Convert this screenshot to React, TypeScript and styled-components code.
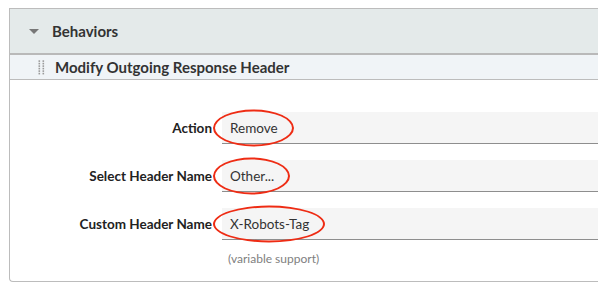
import React from "react";
import styled, { createGlobalStyle } from "styled-components";

const GlobalStyle = createGlobalStyle`
    html, body {
        margin: 0;
        padding: 0;
        background: #fff;
        font-family: Lato, "Liberation Sans", sans-serif;
        color: #333;
    }
`;

const Page = styled.div`
    padding: 8px 0 0 9px;
    width: 598px;
    height: 299px;
    box-sizing: border-box;
    overflow: hidden;
`;

const Panel = styled.section`
    height: 274px;
    box-sizing: border-box;
    border: 1px solid #bcbcbc;
    border-right: none;
    border-radius: 0 0 0 4px;
    display: flex;
    flex-direction: column;
`;

const Header = styled.div`
    display: flex;
    align-items: center;
    height: 44px;
    padding-left: 19px;
    background-color: #e4eaea;
    border-bottom: 2px solid #b9b9b9;
    font-weight: 700;
    font-size: 15px;
    color: #333;
`;

const Caret = styled.span`
    width: 0;
    height: 0;
    margin-right: 13px;
    border-left: 5px solid transparent;
    border-right: 5px solid transparent;
    border-top: 5px solid #777;
`;

const SubHeader = styled.div`
    display: flex;
    align-items: center;
    height: 24px;
    padding-left: 28px;
    background-color: #f0f4f7;
    border-bottom: 1px solid #bcbcbc;
    font-weight: 700;
    font-size: 15px;
    color: #333;
`;

const Grip = styled.svg`
    width: 7px;
    height: 15px;
    margin-right: 10px;
`;

const Form = styled.div`
    display: flex;
    flex-direction: column;
    gap: 16px;
    padding-top: 32px;
`;

const Row = styled.div`
    display: grid;
    grid-template-columns: 202px 1fr;
    column-gap: 10px;
    align-items: center;
`;

const Label = styled.label`
    text-align: right;
    font-weight: 700;
    font-size: 13.5px;
    color: #222;
`;

const Field = styled.div`
    display: flex;
    align-items: center;
    height: 31px;
    padding-left: 8px;
    background-color: #f5f5f5;
    border-bottom: 1px solid #8e8e8e;
    font-size: 13.5px;
    color: #333;
`;

const Marked = styled.span`
    position: relative;
    &::before {
        content: "";
        position: absolute;
        left: -17px;
        right: -16px;
        top: 50%;
        height: 33px;
        transform: translateY(-50%);
        border: 2.5px solid #ee2c14;
        border-radius: 50%;
    }
`;

const Help = styled.div`
    margin: 11px 0 0 218px;
    font-size: 12px;
    color: #808080;
`;

const rows = [
    { label: "Action", value: "Remove" },
    { label: "Select Header Name", value: "Other..." },
    { label: "Custom Header Name", value: "X-Robots-Tag" },
];

export default function App() {
    return (
        <Page>
            <GlobalStyle />
            <Panel>
                <Header>
                    <Caret />
                    Behaviors
                </Header>
                <SubHeader>
                    <Grip viewBox="0 0 7 15">
                        {[0, 1].map((c) =>
                            [0, 1, 2, 3, 4, 5].map((r) => (
                                <rect key={`${c}-${r}`} x={c * 4 + 0.5} y={r * 2.5 + 0.3} width="1.6" height="1.6" fill="#9a9a9a" />
                            ))
                        )}
                    </Grip>
                    Modify Outgoing Response Header
                </SubHeader>
                <Form>
                    {rows.map((r) => (
                        <Row key={r.label}>
                            <Label>{r.label}</Label>
                            <Field>
                                <Marked>{r.value}</Marked>
                            </Field>
                        </Row>
                    ))}
                </Form>
                <Help>(variable support)</Help>
            </Panel>
        </Page>
    );
}
